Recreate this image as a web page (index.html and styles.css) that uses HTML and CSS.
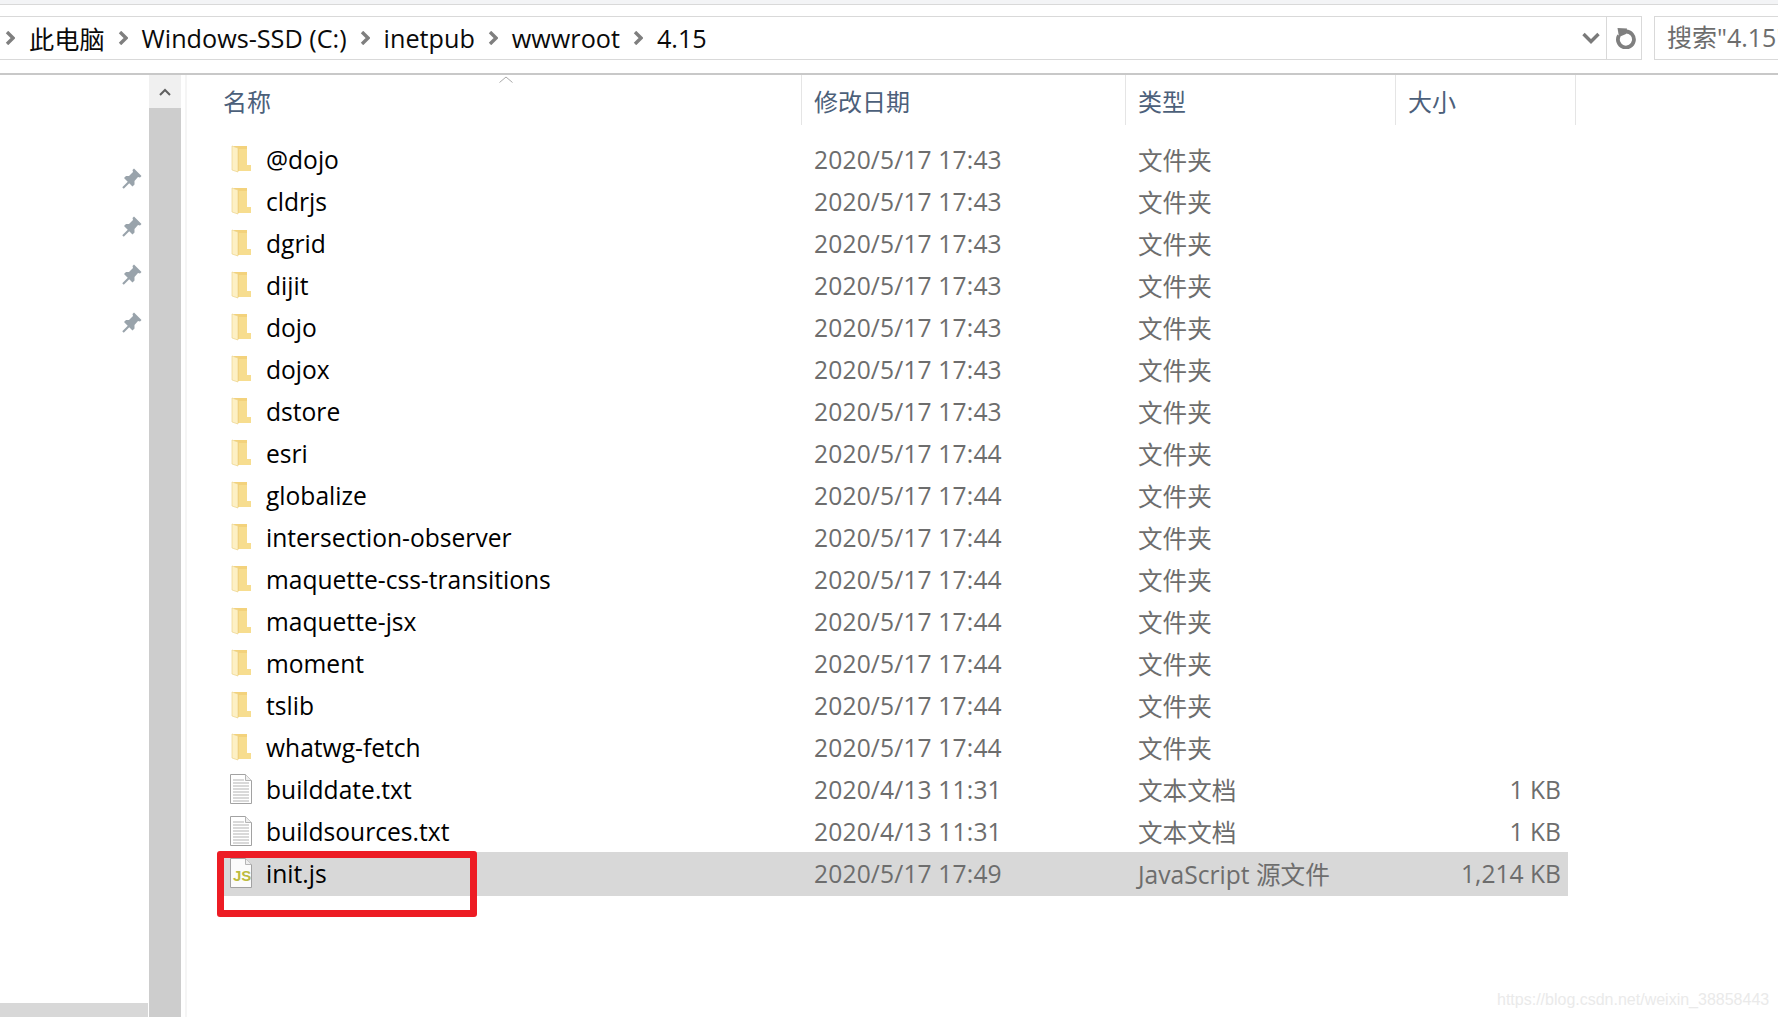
FILE: index.html
```html
<!DOCTYPE html>
<html lang="zh-CN">
<head>
<meta charset="utf-8">
<title>4.15</title>
<link rel="stylesheet" href="styles.css">
</head>
<body>
<svg class="defs" width="0" height="0" aria-hidden="true">
  <defs>
    <symbol id="folder" viewBox="0 0 20 28">
      <path d="M3 1H16V20H20V26H7V27L3 25Z" fill="#f3d27c"/>
      <path d="M8 4H16V20H20V26H8Z" fill="#f7dd8f"/>
      <path d="M1 1L7 3V27L1 25Z" fill="#fdf0c4" stroke="#ecd48d" stroke-width=".7"/>
    </symbol>
    <symbol id="doc" viewBox="0 0 22 30">
      <path d="M.5.5H15.500L21.500 6.500V29.500H.5Z" fill="#fff" stroke="#a2a2a2"/>
      <path d="M15.500.5V6.500H21.500" fill="#eee" stroke="#b5b5b5"/>
      <path d="M3 6H14M3 9H19M3 12H19M3 15H19M3 18H19M3 21H19M3 24H19M3 27H19" stroke="#b4b4b4" stroke-width="1.200"/>
    </symbol>
    <symbol id="jsdoc" viewBox="0 0 22 30">
      <path d="M.5.5H15.500L21.500 6.500V29.500H.5Z" fill="#fbfbfb" stroke="#a2a2a2"/>
      <path d="M15.500.5V6.500H21.500" fill="#eee" stroke="#b5b5b5"/>
    </symbol>
    <symbol id="pin" viewBox="0 0 20 21">
      <path d="M12 .5L19.500 8 18 9.500 16 9 12.500 13 12.500 16.500 10.500 18.500 2 10 4 8 7 8 11 4 10.500 2Z" fill="#99a3ab"/>
      <path d="M7.500 13.500L1 20" stroke="#99a3ab" stroke-width="2.200"/>
    </symbol>
    <symbol id="crumb" viewBox="0 0 10 14"><path d="M2 1L8 7 2 13" fill="none" stroke="#7f7f7f" stroke-width="3.400"/></symbol>
  </defs>
</svg>
<div class="window">
  <div class="top-strip"></div>
  <div class="address-row">
    <div class="address">
      <div class="crumbs">
        <svg class="crumb-icon"><use href="#crumb"/></svg><span>此电脑</span>
        <svg class="crumb-icon"><use href="#crumb"/></svg><span>Windows-SSD (C:)</span>
        <svg class="crumb-icon"><use href="#crumb"/></svg><span>inetpub</span>
        <svg class="crumb-icon"><use href="#crumb"/></svg><span>wwwroot</span>
        <svg class="crumb-icon"><use href="#crumb"/></svg><span>4.15</span>
      </div>
      <svg class="dropdown" viewBox="0 0 18 12"><path d="M1.500 2L9 9.500 16.500 2" fill="none" stroke="#7a7a7a" stroke-width="3.400"/></svg>
      <div class="refresh">
        <svg viewBox="0 0 22 22" width="22" height="22"><path d="M11 4.500A8 8 0 1 1 4 8.500" fill="none" stroke="#7f7f7f" stroke-width="3.800"/><path d="M2.500 1L12 1.500 11 7 4 10Z" fill="#7f7f7f"/></svg>
      </div>
    </div>
    <div class="search">搜索"4.15"</div>
  </div>
  <div class="body">
    <aside class="nav">
      <div class="pins">
        <svg class="pin"><use href="#pin"/></svg>
        <svg class="pin"><use href="#pin"/></svg>
        <svg class="pin"><use href="#pin"/></svg>
        <svg class="pin"><use href="#pin"/></svg>
      </div>
      <div class="nav-hscroll"></div>
    </aside>
    <div class="vscroll">
      <div class="vscroll-up"><svg viewBox="0 0 12 8" width="12" height="8"><path d="M1 7L6 2 11 7" fill="none" stroke="#606060" stroke-width="2"/></svg></div>
      <div class="vscroll-thumb"></div>
    </div>
    <main class="list">
      <div class="columns">
        <div class="col col-name">名称<svg class="sort" viewBox="0 0 14 7" width="14" height="7"><path d="M.5 6.500L7 1 13.500 6.500" fill="none" stroke="#a9a9a9"/></svg></div>
        <div class="col col-date">修改日期</div>
        <div class="col col-type">类型</div>
        <div class="col col-size">大小</div>
      </div>
      <div class="rows">
        <div class="row"><svg class="ficon"><use href="#folder"/></svg><span class="name">@dojo</span><span class="date">2020/5/17 17:43</span><span class="type">文件夹</span><span class="size"></span></div>
        <div class="row"><svg class="ficon"><use href="#folder"/></svg><span class="name">cldrjs</span><span class="date">2020/5/17 17:43</span><span class="type">文件夹</span><span class="size"></span></div>
        <div class="row"><svg class="ficon"><use href="#folder"/></svg><span class="name">dgrid</span><span class="date">2020/5/17 17:43</span><span class="type">文件夹</span><span class="size"></span></div>
        <div class="row"><svg class="ficon"><use href="#folder"/></svg><span class="name">dijit</span><span class="date">2020/5/17 17:43</span><span class="type">文件夹</span><span class="size"></span></div>
        <div class="row"><svg class="ficon"><use href="#folder"/></svg><span class="name">dojo</span><span class="date">2020/5/17 17:43</span><span class="type">文件夹</span><span class="size"></span></div>
        <div class="row"><svg class="ficon"><use href="#folder"/></svg><span class="name">dojox</span><span class="date">2020/5/17 17:43</span><span class="type">文件夹</span><span class="size"></span></div>
        <div class="row"><svg class="ficon"><use href="#folder"/></svg><span class="name">dstore</span><span class="date">2020/5/17 17:43</span><span class="type">文件夹</span><span class="size"></span></div>
        <div class="row"><svg class="ficon"><use href="#folder"/></svg><span class="name">esri</span><span class="date">2020/5/17 17:44</span><span class="type">文件夹</span><span class="size"></span></div>
        <div class="row"><svg class="ficon"><use href="#folder"/></svg><span class="name">globalize</span><span class="date">2020/5/17 17:44</span><span class="type">文件夹</span><span class="size"></span></div>
        <div class="row"><svg class="ficon"><use href="#folder"/></svg><span class="name">intersection-observer</span><span class="date">2020/5/17 17:44</span><span class="type">文件夹</span><span class="size"></span></div>
        <div class="row"><svg class="ficon"><use href="#folder"/></svg><span class="name">maquette-css-transitions</span><span class="date">2020/5/17 17:44</span><span class="type">文件夹</span><span class="size"></span></div>
        <div class="row"><svg class="ficon"><use href="#folder"/></svg><span class="name">maquette-jsx</span><span class="date">2020/5/17 17:44</span><span class="type">文件夹</span><span class="size"></span></div>
        <div class="row"><svg class="ficon"><use href="#folder"/></svg><span class="name">moment</span><span class="date">2020/5/17 17:44</span><span class="type">文件夹</span><span class="size"></span></div>
        <div class="row"><svg class="ficon"><use href="#folder"/></svg><span class="name">tslib</span><span class="date">2020/5/17 17:44</span><span class="type">文件夹</span><span class="size"></span></div>
        <div class="row"><svg class="ficon"><use href="#folder"/></svg><span class="name">whatwg-fetch</span><span class="date">2020/5/17 17:44</span><span class="type">文件夹</span><span class="size"></span></div>
        <div class="row"><svg class="ficon ficon-doc"><use href="#doc"/></svg><span class="name">builddate.txt</span><span class="date">2020/4/13 11:31</span><span class="type">文本文档</span><span class="size">1 KB</span></div>
        <div class="row"><svg class="ficon ficon-doc"><use href="#doc"/></svg><span class="name">buildsources.txt</span><span class="date">2020/4/13 11:31</span><span class="type">文本文档</span><span class="size">1 KB</span></div>
        <div class="row selected"><span class="ficon-wrap"><svg class="ficon ficon-doc"><use href="#jsdoc"/></svg><span class="js-badge">JS</span></span><span class="name">init.js</span><span class="date">2020/5/17 17:49</span><span class="type">JavaScript 源文件</span><span class="size">1,214 KB</span>
          <div class="highlight"></div>
        </div>
      </div>
    </main>
  </div>
  <div class="watermark">https://blog.csdn.net/weixin_38858443</div>
</div>
</body>
</html>
```

FILE: styles.css
```css
* { box-sizing: border-box; }
html, body { margin: 0; padding: 0; height: 100%; background: #fff; overflow: hidden; }
.defs { position: absolute; }
.window {
  position: relative;
  width: 1778px;
  height: 1017px;
  overflow: hidden;
  display: flex;
  flex-direction: column;
  font-family: "Open Sans", "Noto Sans CJK SC", sans-serif;
  font-size: 24.6px;
  color: #000;
}
.top-strip { height: 5px; background: #f3f4f6; border-bottom: 1px solid #d9d9d9; flex: none; }
.address-row {
  height: 70px;
  flex: none;
  padding-top: 11px;
  display: flex;
  align-items: flex-start;
  border-bottom: 2px solid #c8c8c8;
}
.address {
  width: 1642px;
  height: 44px;
  border-top: 1px solid #d9d9d9;
  border-bottom: 1px solid #d9d9d9;
  border-right: 1px solid #d9d9d9;
  display: flex;
  align-items: center;
  flex: none;
}
.crumbs { display: flex; align-items: center; flex: 1; padding-left: 5px; font-size: 25.2px; color: #0a0a0a; }
.crumb-icon { width: 10px; height: 14px; flex: none; margin-right: 14px; }
.crumbs span { margin-right: 13px; }
.dropdown { width: 18px; height: 12px; margin-right: 6px; flex: none; }
.refresh {
  width: 35px;
  height: 100%;
  border-left: 1px solid #d9d9d9;
  padding-left: 3px;
  display: flex;
  align-items: center;
  justify-content: center;
  flex: none;
}
.search {
  margin-left: 12px;
  flex: none;
  width: 200px;
  height: 44px;
  border: 1px solid #d9d9d9;
  border-right: 0;
  padding-left: 12px;
  line-height: 40px;
  font-size: 25px;
  color: #6d6d6d;
  white-space: nowrap;
}
.body { flex: 1; display: flex; min-height: 0; }
.nav { width: 149px; flex: none; display: flex; flex-direction: column; }
.pins { display: flex; flex-direction: column; align-items: flex-end; gap: 27px; padding: 93px 7px 0 0; }
.pin { width: 20px; height: 21px; display: block; }
.nav-hscroll { margin-top: auto; height: 14px; width: 148px; background: #d8d8d8; }
.vscroll { width: 32px; flex: none; background: #cdcdcd; }
.vscroll-up { height: 33px; background: #f0f0f0; display: flex; align-items: center; justify-content: center; }
.list { flex: 1; border-left: 2px solid #f5f5f5; margin-left: 4px; position: relative; }
.columns { display: flex; height: 50px; color: #4c607a; font-size: 24px; }
.col { height: 100%; border-right: 1px solid #e5e5e5; padding-top: 5px; line-height: 44px; position: relative; }
.col-name { width: 615px; padding-left: 36px; }
.col-date { width: 324px; padding-left: 12px; }
.col-type { width: 270px; padding-left: 12px; }
.col-size { width: 180px; padding-left: 12px; }
.sort { position: absolute; left: 312px; top: 1px; }
.rows { display: flex; flex-direction: column; margin-top: 13px; }
.row {
  height: 44px;
  margin-bottom: -2px;
  margin-left: 32px;
  padding-bottom: 2px;
  width: 1349px;
  display: flex;
  align-items: center;
  position: relative;
  white-space: nowrap;
}
.ficon { width: 22px; height: 28px; flex: none; margin-left: 11px; }
.ficon-doc { height: 30px; }
.ficon-wrap { position: relative; display: flex; flex: none; }
.js-badge {
  position: absolute;
  left: 14px;
  top: 9px;
  font-family: "Liberation Sans", sans-serif;
  font-size: 15px;
  line-height: 18px;
  font-weight: 700;
  color: #bdbb3f;
}
.name { width: 548px; margin-left: 14px; flex: none; }
.date { width: 324px; color: #6d6d6d; flex: none; letter-spacing: .15px; }
.type { width: 200px; color: #6d6d6d; flex: none; }
.size { flex: 1; text-align: right; color: #6d6d6d; padding-right: 7px; }
.selected { background: #d8d8d8; }
.highlight {
  position: absolute;
  left: -2px;
  top: -1px;
  width: 260px;
  height: 66px;
  border: 7px solid #ed1c24;
  border-radius: 3px;
}
.watermark {
  position: absolute;
  left: 1497px;
  top: 991px;
  font-family: "Liberation Sans", sans-serif;
  font-size: 16px;
  color: #eaeaea;
  white-space: nowrap;
}
```
